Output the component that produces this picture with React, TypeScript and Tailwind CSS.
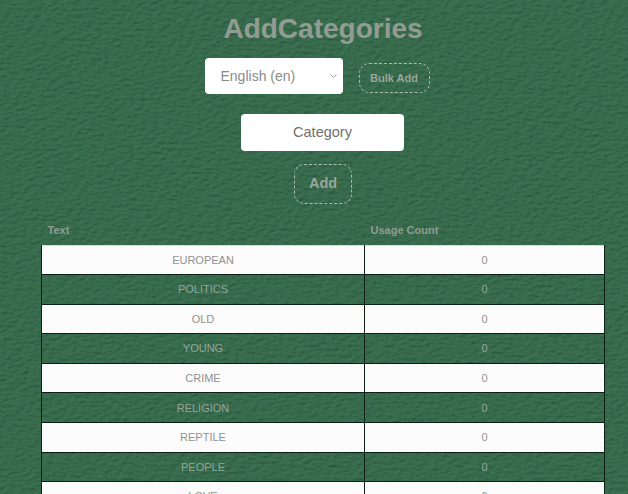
const rows = ["EUROPEAN", "POLITICS", "OLD", "YOUNG", "CRIME", "RELIGION", "REPTILE", "PEOPLE", "LOVE"];

function Leather() {
  return (
    <svg className="absolute inset-0 h-full w-full" aria-hidden="true">
      <filter id="leather" x="0" y="0" width="100%" height="100%">
        <feTurbulence type="fractalNoise" baseFrequency="0.16 0.3" numOctaves="5" seed="11" result="n" />
        <feDiffuseLighting in="n" surfaceScale="1.3" diffuseConstant="0.92" lightingColor="#3d7654">
          <feDistantLight azimuth="235" elevation="62" />
        </feDiffuseLighting>
      </filter>
      <rect width="100%" height="100%" filter="url(#leather)" />
    </svg>
  );
}

export default function App() {
  return (
    <div className="relative h-[494px] w-[628px] overflow-hidden bg-[#356b4b] font-['Liberation_Sans',Arial,sans-serif]">
      <Leather />
      <div className="relative flex flex-col items-center pl-[18px]">
        <h1 className="mt-[11px] text-[28px] leading-[36px] font-bold text-[#929c92]">AddCategories</h1>

        <div className="mt-[11px] mr-[12px] flex items-end gap-[16px]">
          <div className="flex h-[36px] w-[138px] items-center justify-between rounded-[4px] bg-white pr-[5px] pl-[16px] text-[14px] text-[#8b8b8b]">
            <span>English (en)</span>
            <svg width="9" height="6" viewBox="0 0 9 6" fill="none" stroke="#9a9a9a" strokeWidth="1">
              <path d="M1.5 1.5 4.5 4.5 7.5 1.5" />
            </svg>
          </div>
          <button className="mb-[1px] h-[30px] w-[71px] rounded-[10px] border border-dashed border-[#a9bcae] text-[11px] font-bold text-[#9aa69c]">
            Bulk Add
          </button>
        </div>

        <div className="mt-[20px] mr-[1px] flex h-[37px] w-[163px] items-center justify-center rounded-[4px] bg-white text-[14.5px] text-[#6f6f6f]">
          Category
        </div>

        <button className="mt-[13px] h-[40px] w-[58px] rounded-[10px] border border-dashed border-[#a9bcae] text-[14.5px] font-bold text-[#9aa69c]">
          Add
        </button>

        <table className="mt-[17px] w-[564px] table-fixed border-collapse text-[11px]">
          <thead>
            <tr className="h-[24px] text-left text-[#8f9d92]">
              <th className="w-[323px] pb-[6px] pl-[6px] font-bold">Text</th>
              <th className="pb-[6px] pl-[6px] font-bold">Usage Count</th>
            </tr>
          </thead>
          <tbody>
            {rows.map((row, i) => (
              <tr key={row} className={i % 2 === 0 ? "h-[29.6px] bg-[#fbfbfb] text-[#929292]" : "h-[29.6px] text-[#95a598]"}>
                <td className={i === 0 ? "border border-[#0c1f14] border-t-[#d8dcd8] text-center" : "border border-[#0c1f14] text-center"}>{row}</td>
                <td className={i === 0 ? "border border-[#0c1f14] border-t-[#d8dcd8] text-center" : "border border-[#0c1f14] text-center"}>0</td>
              </tr>
            ))}
          </tbody>
        </table>
      </div>
    </div>
  );
}
